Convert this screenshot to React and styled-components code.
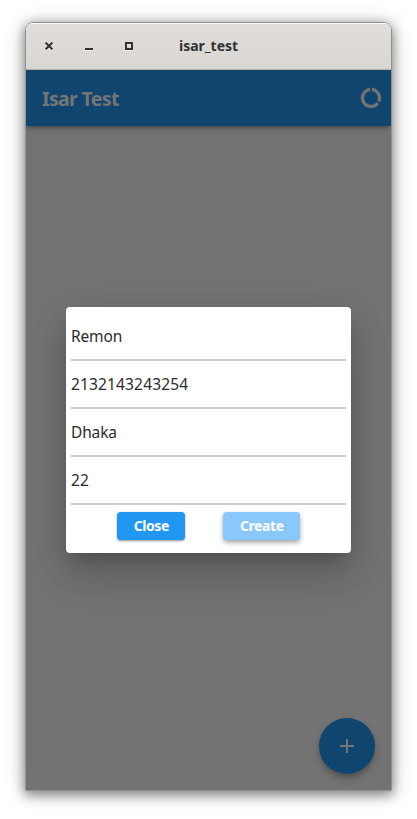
import React from 'react';
import styled, { createGlobalStyle } from 'styled-components';

const GlobalStyle = createGlobalStyle`
  * { box-sizing: border-box; }
  html, body { margin: 0; background: #fff; overflow: hidden; }
  body { font-family: 'Noto Sans', 'Open Sans', sans-serif; }
`;

const Desktop = styled.main`
  width: 417px;
  height: 819px;
  padding: 22px 25px 28px;
  background: #fff;
`;

const Window = styled.section`
  display: flex;
  flex-direction: column;
  width: 367px;
  height: 769px;
  border: 1px solid #929191;
  border-radius: 8px 8px 0 0;
  overflow: hidden;
  box-shadow: 0 3px 12px 1px rgba(0, 0, 0, 0.45), 0 2px 26px rgba(0, 0, 0, 0.14);
`;

const TitleBar = styled.header`
  display: flex;
  align-items: center;
  flex: 0 0 47px;
  padding-left: 13px;
  border-bottom: 1px solid #bfb8b1;
  background: linear-gradient(#e1dedb, #dad6d2);
  box-shadow: inset 0 1px #f9f8f8;
`;

const WindowButton = styled.button`
  display: grid;
  place-items: center;
  width: 20px;
  height: 20px;
  margin-right: 20px;
  padding: 0;
  border: 0;
  background: none;
  color: #2e3436;

  svg { display: block; filter: drop-shadow(0 1px 0 #f3f1ef); }
`;

const WindowTitle = styled.h1`
  margin: 0 0 0 20px;
  color: #2e3436;
  font-size: 14px;
  line-height: 20px;
  font-weight: 700;
`;

const AppBar = styled.nav`
  position: relative;
  display: flex;
  align-items: center;
  justify-content: space-between;
  flex: 0 0 56px;
  padding: 0 8px 0 16px;
  background: #10456f;
  color: #757575;
  box-shadow: 0 2px 4px -1px rgba(0, 0, 0, 0.25), 0 3px 6px rgba(0, 0, 0, 0.18);
  svg { display: block; }
`;

const AppTitle = styled.h2`
  margin: 2px 0 0;
  font-size: 19.5px;
  line-height: 24px;
  font-weight: 700;
  letter-spacing: -0.65px;
`;

const Content = styled.div`
  display: flex;
  flex-direction: column;
  align-items: center;
  flex: 1;
  padding: 181px 16px 16px;
  background: #737373;
`;

const Dialog = styled.form`
  width: 285px;
  height: 246px;
  padding: 6px 5px 0;
  border-radius: 4px;
  background: #fff;
  box-shadow: 0 11px 15px -7px rgba(0, 0, 0, 0.2), 0 24px 38px 3px rgba(0, 0, 0, 0.14),
    0 9px 40px 2px rgba(0, 0, 0, 0.08);
`;

const Field = styled.div`
  height: 48px;
  padding-top: 11px;
  border-bottom: 2px solid #cdcdcd;
  color: #2b2b2b;
  font-size: 15.5px;
  line-height: 24px;
  letter-spacing: ${(p) => p.$tracking};
`;

const Actions = styled.div`
  display: flex;
  gap: 38px;
  padding: 7px 0 0 46.3px;
`;

const ActionButton = styled.button`
  width: ${(p) => p.$width};
  height: 28px;
  padding: 0;
  border: 0;
  border-radius: 3.5px;
  background: ${(p) => (p.$highlight ? '#8ac8fb' : '#2196f3')};
  color: #fff;
  font: 700 14px/28px 'Noto Sans', sans-serif;
  letter-spacing: -0.4px;
  box-shadow: ${(p) =>
    p.$highlight
      ? '0 2px 4px -1px rgba(0,0,0,.2), 0 3px 5px rgba(0,0,0,.24)'
      : '0 2px 2px -1px rgba(0,0,0,.2), 0 1px 3px rgba(0,0,0,.28)'};
`;

const FloatingButton = styled.button`
  display: grid;
  place-items: center;
  align-self: flex-end;
  width: 56px;
  height: 56px;
  margin-top: auto;
  padding: 0;
  border: 0;
  border-radius: 50%;
  background: #10456f;
  color: #757575;
  box-shadow: 0 3px 5px -1px rgba(0, 0, 0, 0.18), 0 5px 9px rgba(0, 0, 0, 0.18);
`;

const fields = [
  { value: 'Remon', tracking: '-0.15px' },
  { value: '2132143243254', tracking: '0.15px' },
  { value: 'Dhaka', tracking: '-0.15px' },
  { value: '22', tracking: '0.15px' },
];

export default function App() {
  return (
    <Desktop>
      <GlobalStyle />
      <Window>
        <TitleBar>
          <WindowButton type="button" aria-label="Close window">
            <svg width="8" height="8" viewBox="0 0 8 8" fill="none" stroke="currentColor" strokeWidth="2">
              <path d="M.6.6l6.8 6.8M7.4.6L.6 7.4" />
            </svg>
          </WindowButton>
          <WindowButton type="button" aria-label="Minimize">
            <svg width="8" height="8" viewBox="0 0 8 8" fill="currentColor">
              <path d="M0 6h8v2H0z" />
            </svg>
          </WindowButton>
          <WindowButton type="button" aria-label="Maximize">
            <svg width="8" height="8" viewBox="0 0 8 8" fill="none" stroke="currentColor" strokeWidth="2">
              <path d="M1 1h6v6H1z" />
            </svg>
          </WindowButton>
          <WindowTitle>isar_test</WindowTitle>
        </TitleBar>
        <AppBar>
          <AppTitle>Isar Test</AppTitle>
          <svg width="24" height="24" viewBox="0 0 24 24" fill="currentColor" stroke="currentColor" strokeWidth="0.3">
            <path d="M13 2.05v3.03c3.39.49 6 3.39 6 6.92 0 .9-.18 1.75-.48 2.54l2.6 1.53c.56-1.24.88-2.62.88-4.07 0-5.18-3.95-9.45-9-9.95zM12 19c-3.87 0-7-3.13-7-7 0-3.53 2.61-6.43 6-6.92V2.05c-5.06.5-9 4.76-9 9.95 0 5.52 4.47 10 9.99 10 3.31 0 6.24-1.61 8.06-4.09l-2.6-1.53C16.17 17.98 14.21 19 12 19z" />
          </svg>
        </AppBar>
        <Content>
          <Dialog>
            {fields.map((field) => (
              <Field key={field.value} $tracking={field.tracking}>{field.value}</Field>
            ))}
            <Actions>
              <ActionButton type="button" $width="68px">Close</ActionButton>
              <ActionButton type="button" $width="77px" $highlight>Create</ActionButton>
            </Actions>
          </Dialog>
          <FloatingButton type="button" aria-label="Add">
            <svg width="24" height="24" viewBox="0 0 24 24" fill="currentColor">
              <path d="M19 13h-6v6h-2v-6H5v-2h6V5h2v6h6v2z" />
            </svg>
          </FloatingButton>
        </Content>
      </Window>
    </Desktop>
  );
}
